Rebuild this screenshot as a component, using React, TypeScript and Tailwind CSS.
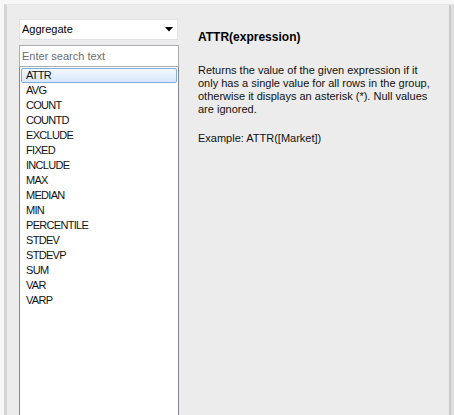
import React from 'react'

const functions = ["ATTR", "AVG", "COUNT", "COUNTD", "EXCLUDE", "FIXED", "INCLUDE", "MAX", "MEDIAN", "MIN", "PERCENTILE", "STDEV", "STDEVP", "SUM", "VAR", "VARP"]

const App = () => {
  const selected = "ATTR"
  return (
    <div className="w-[454px] h-[415px] overflow-hidden bg-[#f7f7f7] pt-1 pl-1 text-[11px] text-black font-['Liberation_Sans',Arial,sans-serif]">
      <div className="flex h-[420px] bg-[#ececec] border-l-[3px] border-l-[#d6d6d6] border-t border-t-[#e6e6e6]">
        {/* left: category + list */}
        <div className="w-[172px] shrink-0 pl-3 pt-[14px] flex flex-col">
          <div className="w-[159px] h-[21px] bg-white border border-[#e3e3e3] flex items-center justify-between pl-[2px] pr-[4px]">
            <span>Aggregate</span>
            <svg width="8" height="5" viewBox="0 0 8 5"><path d="M0 0h8L4 4.5z" fill="#000" /></svg>
          </div>
          <div className="mt-[5px] w-[160px] h-[22px] bg-white border border-[#abadb3] flex items-center pl-[2px]">
            <span className="text-[#6d6d6d]">Enter search text</span>
          </div>
          <div className="w-[160px] flex-1 bg-white border border-t-0 border-[#828790] pt-px">
            {functions.map((f) => (
              <div
                key={f}
                className={
                  f === selected
                    ? "mx-px h-[15px] leading-[13px] pl-[4px] tracking-[-0.7px] border border-[#84acdd] rounded-[2px] bg-gradient-to-b from-[#f1f7fe] to-[#d8e8fb] text-[#111]"
                    : "mx-px h-[15px] leading-[15px] pl-[5px] tracking-[-0.7px] text-[#111]"
                }
              >
                {f}
              </div>
            ))}
          </div>
        </div>
        {/* right: description */}
        <div className="flex-1 pl-[19px] pt-[25px] pr-2">
          <div className="font-bold text-[12px] leading-[15px]">ATTR(expression)</div>
          <p className="mt-[19px] w-[232px] leading-[13px] text-[#111]">
            Returns the value of the given expression if it only has a single value for all rows in the group, otherwise it displays an asterisk (*). Null values are ignored.
          </p>
          <p className="mt-[16px] leading-[13px] text-[#111]">Example: ATTR([Market])</p>
        </div>
        <div className="w-[2px] shrink-0 bg-[#c9c9c9]" />
        <div className="w-[3px] shrink-0 bg-[#dedede]" />
      </div>
    </div>
  )
}

export default App
